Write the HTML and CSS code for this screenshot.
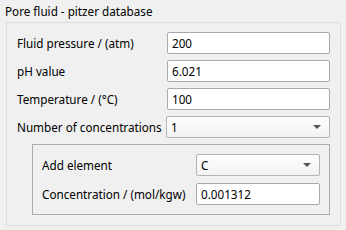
FILE: index.html
```html
<!DOCTYPE html>
<html lang="en">
<head>
    <meta charset="UTF-8">
    <title>Pore fluid - pitzer database</title>
    <link rel="stylesheet" href="styles.css">
</head>
<body>
    <div class="title">Pore fluid - pitzer database</div>

    <div class="group">
        <div class="form-grid">
            <label>Fluid pressure / (atm)</label>
            <input type="text" value="200">

            <label>pH value</label>
            <input type="text" value="6.021">

            <label>Temperature / (°C)</label>
            <input type="text" value="100">

            <label>Number of concentrations</label>
            <div class="combo wide"><span>1</span><span class="arrow"></span></div>
        </div>

        <!-- one box per concentration -->
        <div class="inner-group">
            <div class="form-grid inner">
                <label>Add element</label>
                <div class="combo"><span>C</span><span class="arrow"></span></div>

                <label>Concentration / (mol/kgw)</label>
                <input type="text" value="0.001312">
            </div>
        </div>
    </div>
</body>
</html>
```

FILE: styles.css
```css
body {
    margin: 0;
    background-color: #f0f0f0;
    font-family: "Noto Sans", "Open Sans", sans-serif;
    font-size: 11.7px;
    color: #000;
}
.title {
    padding: 3px 0 0 5px;
    height: 19px;
    line-height: 16px;
}
.group {
    margin: 0 5px 0 6px;
    border: 1px solid #dcdcdc;
    border-radius: 2px;
    padding: 9px 10px 0 10px;
    box-sizing: border-box;
    height: 204px;
}
.form-grid {
    display: grid;
    grid-template-columns: 150px 163px;
    row-gap: 6px;
    align-items: center;
}
.form-grid label {
    line-height: 22px;
}
input[type="text"] {
    height: 22px;
    box-sizing: border-box;
    border: 1px solid #a9a9a9;
    border-radius: 2px;
    padding: 0 4px;
    font: inherit;
    color: #000;
    background: #fff;
    margin: 0;
}
.combo {
    height: 22px;
    box-sizing: border-box;
    border: 1px solid #b4b4b4;
    border-radius: 2px;
    padding: 0 4px;
    display: flex;
    align-items: center;
    justify-content: space-between;
    background: linear-gradient(#fdfdfd, #f3f3f3);
}
.combo.wide {
    margin-left: -1px;
}
.arrow {
    width: 0;
    height: 0;
    border-left: 4px solid transparent;
    border-right: 4px solid transparent;
    border-top: 4px solid #555;
    margin-right: 4px;
}
.inner-group {
    margin-top: 6px;
    margin-left: 15px;
    border: 1px solid #acacac;
    padding: 9px;
}
.form-grid.inner {
    grid-template-columns: 154px 124px;
    row-gap: 7px;
}
```
